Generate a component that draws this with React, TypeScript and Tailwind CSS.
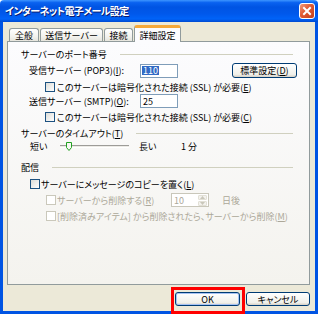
import React from 'react'

const FONT = "font-['Noto_Sans_CJK_JP','Noto_Sans_CJK_SC',sans-serif] [font-feature-settings:'palt']"

function Key({ k }: { k: string }) {
  return (
    <>
      (<span className="underline underline-offset-1">{k}</span>)
    </>
  )
}

function Check({ disabled }: { disabled?: boolean }) {
  return (
    <span
      className={
        disabled
          ? 'w-[10px] h-[10px] shrink-0 border border-[#cac8bb] bg-white'
          : 'w-[10px] h-[10px] shrink-0 border border-[#1c5180] bg-[linear-gradient(135deg,#dcdcd7,#ffffff)]'
      }
    />
  )
}

function GroupHeader({ children }: { children: React.ReactNode }) {
  return (
    <div className="flex items-center h-[14px] pl-[13px] pr-[16px]">
      <span className="whitespace-nowrap">{children}</span>
      <span className="flex-1 h-px bg-[#d0d0bf] ml-[13px]" />
    </div>
  )
}

function Tab({ label, active, w }: { label: string; active?: boolean; w: string }) {
  if (active) {
    return (
      <div
        className={`${w} h-[17px] -mb-px relative z-10 flex items-center justify-center bg-[#fcfcfe] border-x border-[#919b9c] border-t-[3px] border-t-[#f6a93a] rounded-t-[3px]`}
      >
        {label}
      </div>
    )
  }
  return (
    <div
      className={`${w} h-[13px] flex items-center justify-center border-x border-t border-[#919b9c] rounded-t-[3px] bg-[linear-gradient(#ffffff,#f3f3ef_60%,#e6e5dd)]`}
    >
      {label}
    </div>
  )
}

const BTN =
  'h-[14px] rounded-[3px] border border-[#003c74] bg-[linear-gradient(#ffffff,#f0f0ea_80%,#d6d0c5)] flex items-center justify-center font-normal'

export default function App() {
  return (
    <div className={`w-[318px] h-[314px] relative flex flex-col bg-white text-[9px] leading-none text-black ${FONT}`}>
      {/* title bar */}
      <div className="h-[22px] shrink-0 flex items-center justify-between pl-[5px] pr-[3px] rounded-t-[4px] bg-[linear-gradient(#3d95ff_0%,#0a62f0_12%,#0054e3_32%,#0058eb_62%,#0063f8_86%,#004ad0_100%)]">
        <span className="text-white font-bold text-[10px] tracking-[-0.6px] [text-shadow:1px_1px_0_#0a1a6e]">
          インターネット電子メール設定
        </span>
        <div className="w-[16px] h-[16px] rounded-[3px] border border-white bg-[linear-gradient(135deg,#f19a7c,#e05a33_45%,#c3401c)] flex items-center justify-center">
          <svg width="10" height="10" viewBox="0 0 10 10">
            <path d="M2 2 L8 8 M8 2 L2 8" stroke="#fff" strokeWidth="2" strokeLinecap="square" />
          </svg>
        </div>
      </div>

      {/* body */}
      <div className="flex-1 flex flex-col bg-[#ece9d8] border-x-[3px] border-b-[3px] border-[#0054e3] pl-[4px] pr-[5px]">
        {/* tabs */}
        <div className="h-[19px] shrink-0 flex items-end pl-[2px] gap-px">
          <Tab label="全般" w="w-[30px]" />
          <Tab label="送信サーバー" w="w-[63px]" />
          <Tab label="接続" w="w-[29px]" />
          <Tab label="詳細設定" w="w-[47px]" active />
        </div>

        {/* tab panel */}
        <div className="h-[244px] shrink-0 border border-[#919b9c] bg-[linear-gradient(#fcfcfe,#f4f3ee)] flex flex-col">
          <div className="mt-[5px]">
            <GroupHeader>サーバーのポート番号</GroupHeader>
          </div>

          <div className="mt-[2px] h-[15px] flex items-center pl-[21px]">
            <span className="w-[111px] shrink-0 whitespace-nowrap">
              受信サーバー (POP3)<Key k="I" />:
            </span>
            <div className="w-[38px] h-[14px] border border-[#7f9db9] bg-white flex items-center pl-px">
              <span className="bg-[#316ac5] text-white px-px">110</span>
            </div>
            <button className={`ml-[54px] w-[65px] ${BTN} h-[15px]`}>
              標準設定<Key k="D" />
            </button>
          </div>

          <div className="mt-[3px] h-[12px] flex items-center pl-[37px] gap-[2px]">
            <Check />
            <span className="whitespace-nowrap">
              このサーバーは暗号化された接続 (SSL) が必要<Key k="E" />
            </span>
          </div>

          <div className="mt-px h-[14px] flex items-center pl-[21px]">
            <span className="w-[111px] shrink-0 whitespace-nowrap">
              送信サーバー (SMTP)<Key k="O" />:
            </span>
            <div className="w-[38px] h-[14px] border border-[#7f9db9] bg-white flex items-center pl-[2px]">
              25
            </div>
          </div>

          <div className="mt-[3px] h-[12px] flex items-center pl-[37px] gap-[2px]">
            <Check />
            <span className="whitespace-nowrap">
              このサーバーは暗号化された接続 (SSL) が必要<Key k="C" />
            </span>
          </div>

          <div className="mt-[3px]">
            <GroupHeader>
              サーバーのタイムアウト<Key k="T" />
            </GroupHeader>
          </div>

          <div className="h-[12px] flex items-center pl-[22px]">
            <span className="w-[30px] shrink-0">短い</span>
            <div className="relative w-[69px] h-[3px] border-t border-[#9d9c99] border-b border-b-white bg-[#ecebe6]">
              <svg className="absolute left-[6px] -top-[4px]" width="6" height="9" viewBox="0 0 6 9">
                <path d="M0.5 0.5 H5.5 V5.5 L3 8.5 L0.5 5.5 Z" fill="#f7f7f4" stroke="#21a121" strokeWidth="1" />
              </svg>
            </div>
            <span className="ml-[10px] w-[42px] shrink-0">長い</span>
            <span>1 分</span>
          </div>

          <div className="mt-[8px]">
            <GroupHeader>配信</GroupHeader>
          </div>

          <div className="mt-[4px] h-[12px] flex items-center pl-[22px] gap-px">
            <Check />
            <span className="whitespace-nowrap">
              サーバーにメッセージのコピーを置く<Key k="L" />
            </span>
          </div>

          <div className="mt-[3px] h-[14px] flex items-center pl-[38px] text-[#aca899]">
            <Check disabled />
            <span className="ml-px w-[114px] shrink-0 whitespace-nowrap">
              サーバーから削除する<Key k="R" />
            </span>
            <div className="w-[38px] h-[14px] border border-[#c9c7ba] bg-white flex items-center pl-[2px] relative">
              10
              <div className="absolute right-px top-px bottom-px w-[9px] flex flex-col gap-px">
                <div className="flex-1 rounded-[1px] bg-[#f3f2ee] border border-[#e2e0d6] flex items-center justify-center">
                  <svg width="5" height="3" viewBox="0 0 5 3"><path d="M0 3 L2.5 0 L5 3 Z" fill="#c9c7ba" /></svg>
                </div>
                <div className="flex-1 rounded-[1px] bg-[#f3f2ee] border border-[#e2e0d6] flex items-center justify-center">
                  <svg width="5" height="3" viewBox="0 0 5 3"><path d="M0 0 L2.5 3 L5 0 Z" fill="#c9c7ba" /></svg>
                </div>
              </div>
            </div>
            <span className="ml-[13px]">日後</span>
          </div>

          <div className="mt-[3px] h-[12px] flex items-center pl-[38px] gap-px text-[#aca899]">
            <Check disabled />
            <span className="whitespace-nowrap">
              [削除済みアイテム] から削除されたら、サーバーから削除<Key k="M" />
            </span>
          </div>
        </div>

        {/* buttons */}
        <div className="mt-[7px] flex justify-end gap-[6px]">
          <button className={`w-[65px] ${BTN} shadow-[inset_0_0_0_1px_#a6c2f3]`}>OK</button>
          <button className={`w-[64px] ${BTN}`}>キャンセル</button>
        </div>
      </div>

      {/* red highlight annotation */}
      <div className="absolute left-[171px] top-[287px] w-[74px] h-[27px] border-[3px] border-[#ff0000]" />
    </div>
  )
}
